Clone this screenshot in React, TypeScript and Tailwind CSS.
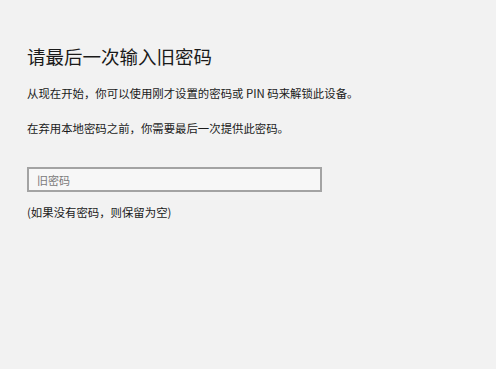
import React from 'react'

const FONT = '"Noto Sans CJK SC", "Noto Sans", sans-serif'

export default function App() {
  return (
    <div
      lang="zh-CN"
      className="w-[496px] h-[369px] bg-[#f2f2f2] text-[#1a1a1a] pl-[27px] pt-[44px] flex flex-col items-start"
      style={{ fontFamily: FONT }}
    >
      <h1 className="text-[18.5px] leading-[24px] font-normal">请最后一次输入旧密码</h1>

      <p className="mt-[17px] text-[11.4px] leading-[16px]">
        从现在开始，你可以使用刚才设置的密码或 PIN 码来解锁此设备。
      </p>

      <p className="mt-[19px] text-[11.4px] leading-[16px]">
        在弃用本地密码之前，你需要最后一次提供此密码。
      </p>

      <input
        type="password"
        placeholder="旧密码"
        className="mt-[31px] w-[295px] h-[25px] border-2 border-[#a3a3a3] bg-[#f7f7f7] px-[8px] text-[11px] outline-none placeholder:text-[#7a7a7a]"
        style={{ fontFamily: FONT }}
      />

      <p className="mt-[12px] text-[11.4px] leading-[16px]">(如果没有密码，则保留为空)</p>
    </div>
  )
}
